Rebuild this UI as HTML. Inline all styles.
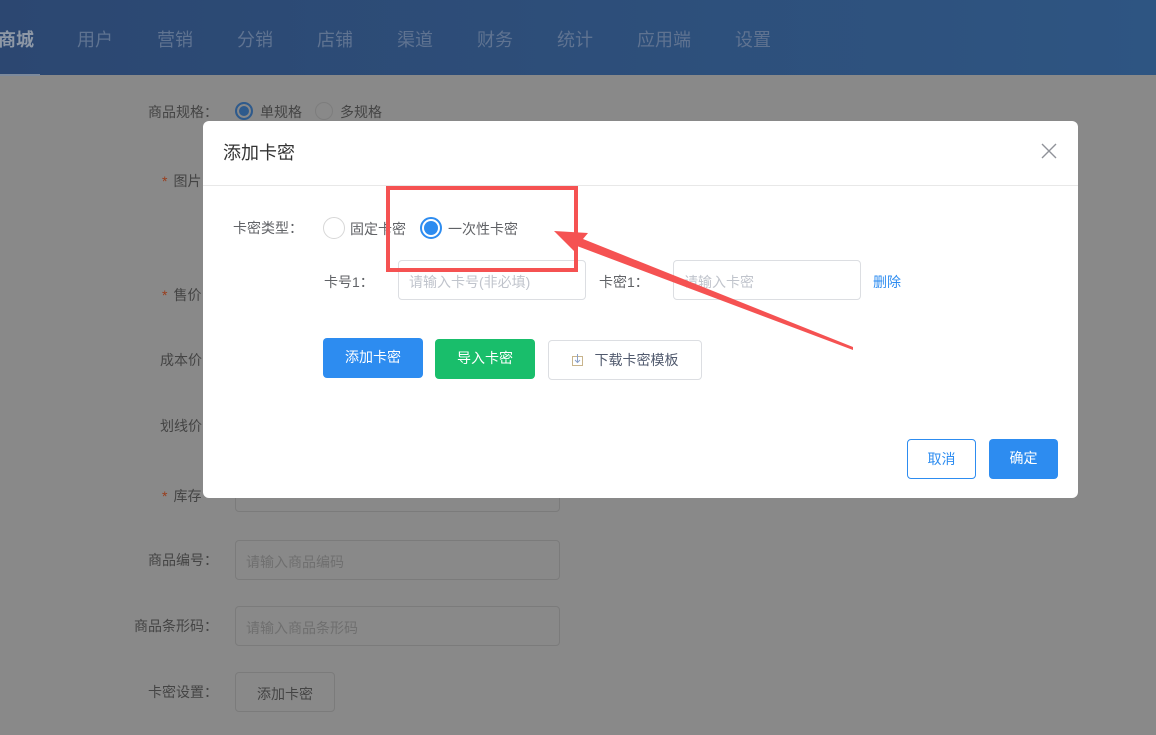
<!DOCTYPE html>
<html><head><meta charset="utf-8"><style>
*{margin:0;padding:0;box-sizing:border-box}
body{width:1156px;height:735px;overflow:hidden;position:relative;background:#898989;font-family:"Liberation Sans","Noto Sans CJK SC",sans-serif;font-size:14px}
.nav{position:absolute;left:0;top:0;width:1156px;height:75px;background:linear-gradient(90deg,#2c4771,#2e5582)}
.nav span{position:absolute;top:26px;font-size:18px;color:#5f7391}
.nav .act{color:#8e98a6;font-weight:bold}
.ul{position:absolute;left:0;top:74px;width:40px;height:2px;background:#7d8a9c}
.lbl{position:absolute;color:#444;font-size:14px;text-align:right;width:128px}
.lbl2{position:absolute;color:#444;font-size:14px}
.lbl2 i{color:#9a3d1c;font-style:normal;margin-right:6px}
.inp{position:absolute;left:235px;width:325px;height:40px;border:1px solid #7b7b7b;border-radius:4px;color:#6f6f6f;padding:11px 10px;font-size:14px}
.modal{position:absolute;left:203px;top:121px;width:875px;height:377px;background:#fff;border-radius:6px}
.hd{height:65px;border-bottom:1px solid #e8e8e8;font-size:18px;color:#333;padding:18px 20px}
.x{position:absolute;right:21px;top:22px}
.t{position:absolute;font-size:14px;color:#606266}
.radio{position:absolute;width:22px;height:22px;border-radius:50%;border:1px solid #d7d7d7;background:#fff}
.radio.on{border:2px solid #2d8cf0}
.radio.on::after{content:"";position:absolute;left:2px;top:2px;width:14px;height:14px;border-radius:50%;background:#2d8cf0}
.mi{position:absolute;height:40px;border:1px solid #dcdee2;border-radius:4px;color:#c0c4cc;padding:11px 10px;font-size:14px}
.btn{position:absolute;height:40px;border-radius:4px;color:#fff;font-size:14px;text-align:center;line-height:38px}
</style></head><body>
<div class="nav">
<span class="act" style="left:-2px">商城</span><span style="left:77px">用户</span><span style="left:157px">营销</span><span style="left:237px">分销</span><span style="left:317px">店铺</span><span style="left:397px">渠道</span><span style="left:477px">财务</span><span style="left:557px">统计</span><span style="left:637px">应用端</span><span style="left:735px">设置</span>
</div><div class="ul"></div>
<div class="lbl" style="left:90px;top:102px">商品规格：</div>
<div style="position:absolute;left:235px;top:102px;width:18px;height:18px;border-radius:50%;border:2px solid #2e5a8c;background:#2e5a8c;box-shadow:inset 0 0 0 2px #898989"></div>
<div class="t" style="left:260px;top:102px;color:#444">单规格</div>
<div style="position:absolute;left:315px;top:102px;width:18px;height:18px;border-radius:50%;border:1px solid #7d7d7d"></div>
<div class="t" style="left:340px;top:102px;color:#444">多规格</div>
<div class="lbl2" style="left:162px;top:171px"><i>*</i>图片</div>
<div class="lbl2" style="left:162px;top:285px"><i>*</i>售价</div>
<div class="lbl2" style="left:160px;top:350px">成本价</div>
<div class="lbl2" style="left:160px;top:416px">划线价</div>
<div class="lbl2" style="left:162px;top:486px"><i>*</i>库存</div>
<div class="inp" style="top:472px"></div>
<div class="lbl" style="left:90px;top:550px">商品编号：</div>
<div class="inp" style="top:540px">请输入商品编码</div>
<div class="lbl" style="left:90px;top:616px">商品条形码：</div>
<div class="inp" style="top:606px">请输入商品条形码</div>
<div class="lbl" style="left:90px;top:682px">卡密设置：</div>
<div class="inp" style="top:672px;width:100px;color:#444;text-align:center">添加卡密</div>

<div class="modal">
<div class="hd">添加卡密</div>
<svg class="x" width="16" height="16" viewBox="0 0 16 16"><path d="M1 1L15 15M15 1L1 15" stroke="#909399" stroke-width="1.4"/></svg>
<div class="t" style="left:30px;top:97px">卡密类型：</div>
<div class="radio" style="left:120px;top:96px"></div>
<div class="t" style="left:147px;top:98px">固定卡密</div>
<div class="radio on" style="left:217px;top:96px"></div>
<div class="t" style="left:245px;top:98px">一次性卡密</div>
<div class="t" style="left:121px;top:151px">卡号1：</div>
<div class="mi" style="left:195px;top:139px;width:188px">请输入卡号(非必填)</div>
<div class="t" style="left:396px;top:151px">卡密1：</div>
<div class="mi" style="left:470px;top:139px;width:188px">请输入卡密</div>
<div class="t" style="left:670px;top:151px;color:#2d8cf0">删除</div>
<div class="btn" style="left:120px;top:217px;width:100px;background:#2d8cf0">添加卡密</div>
<div class="btn" style="left:232px;top:218px;width:100px;background:#19be6b">导入卡密</div>
<div class="btn" style="left:345px;top:219px;width:154px;border:1px solid #dcdee2;color:#515a6e"><svg width="11" height="12" viewBox="0 0 11 12" style="vertical-align:-1px;margin-right:12px"><rect x="0.5" y="2.5" width="10" height="9" fill="none" stroke="#c8b48c"/><path d="M5.5 0V8M3 6L5.5 8.5L8 6" fill="none" stroke="#8aa0c8"/></svg>下载卡密模板</div>
<div class="btn" style="left:704px;top:318px;width:69px;border:1px solid #2d8cf0;color:#2d8cf0;background:#fff">取消</div>
<div class="btn" style="left:786px;top:318px;width:69px;background:#2d8cf0">确定</div>
</div>

<svg style="position:absolute;left:0;top:0" width="1156" height="735">
<rect x="388" y="188" width="188" height="82" fill="none" stroke="#f55252" stroke-width="4"/>
<polygon points="554,231 588,233 583,239 853,347 853,350 577,246 575,252" fill="#f55252"/>
</svg>
</body></html>
